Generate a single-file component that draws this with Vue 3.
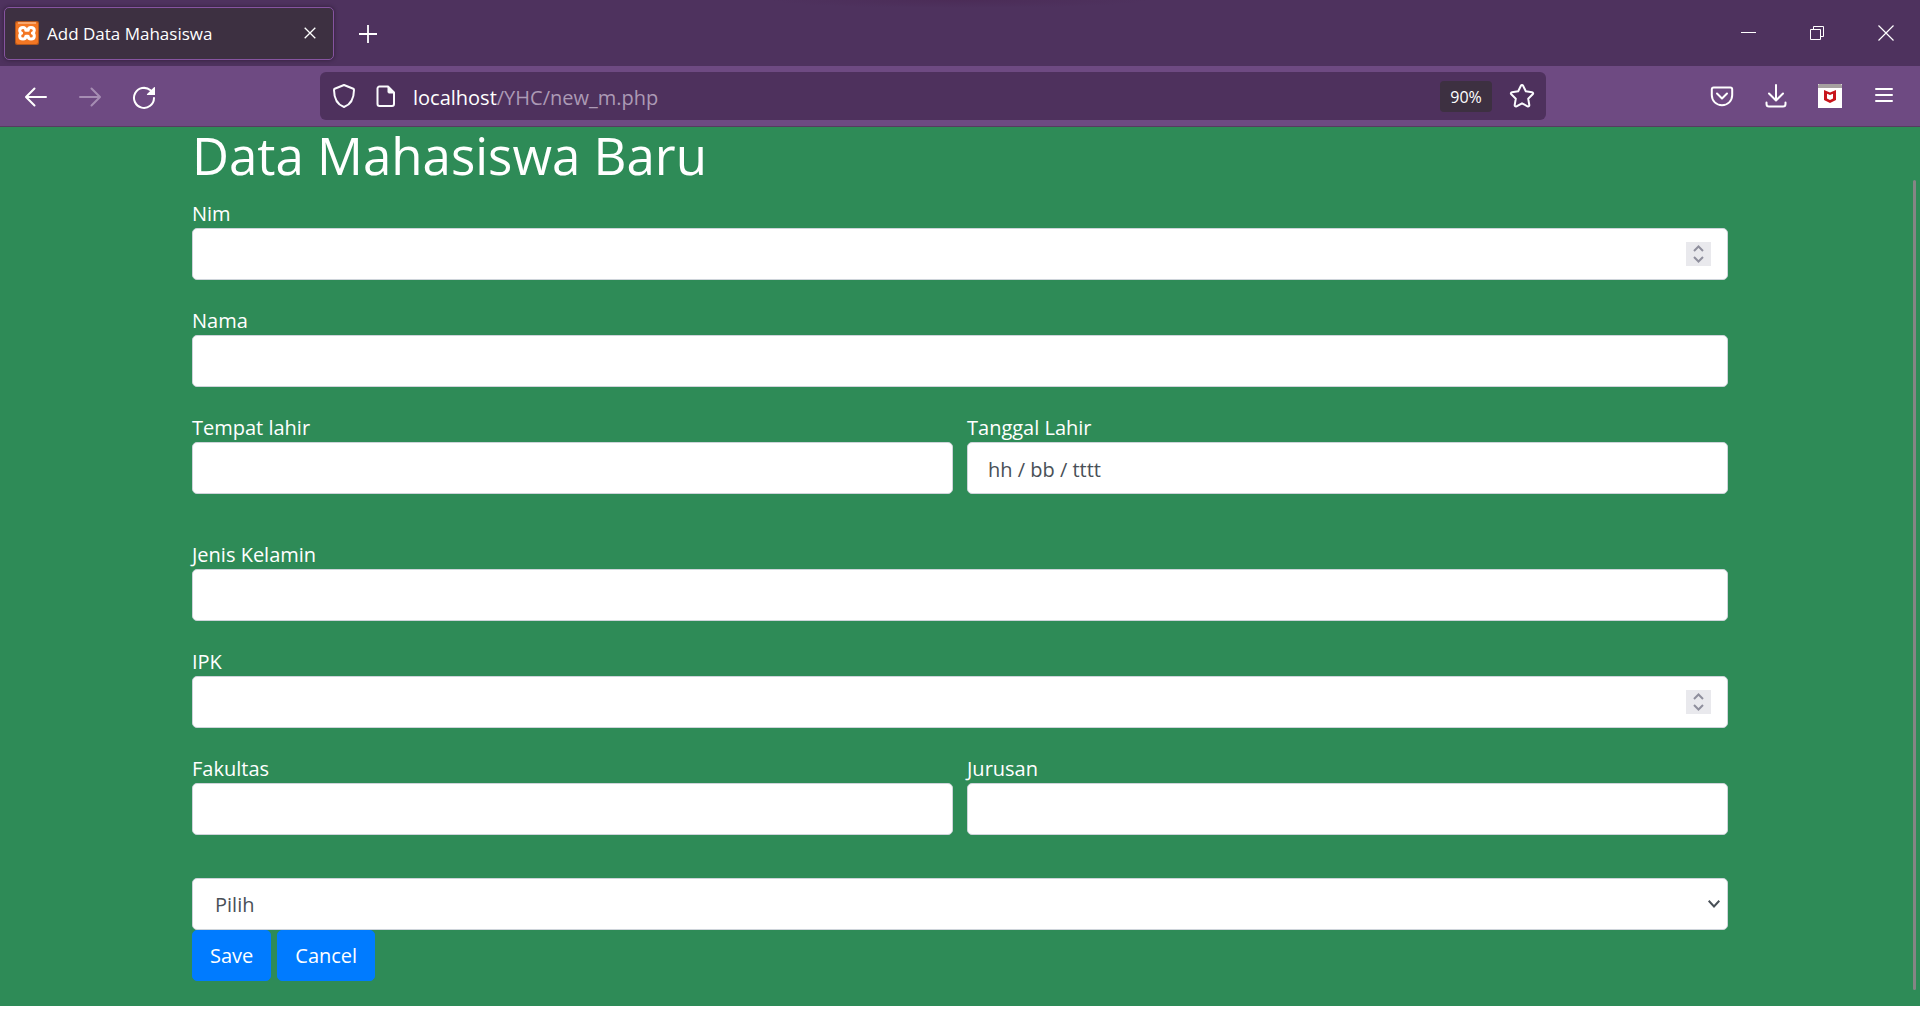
<script setup>
import { reactive } from 'vue'

const form = reactive({
  nim: '', nama: '', tempat: '', tanggal: '', kelamin: '', ipk: '', fakultas: '', jurusan: '', pilihan: ''
})

const rows = [
  [{ id: 'nim', label: 'Nim', type: 'number' }],
  [{ id: 'nama', label: 'Nama', type: 'text' }],
  [
    { id: 'tempat', label: 'Tempat lahir', type: 'text' },
    { id: 'tanggal', label: 'Tanggal Lahir', type: 'text', placeholder: 'hh / bb / tttt' }
  ],
  [{ id: 'kelamin', label: 'Jenis Kelamin', type: 'text' }],
  [{ id: 'ipk', label: 'IPK', type: 'number' }],
  [
    { id: 'fakultas', label: 'Fakultas', type: 'text' },
    { id: 'jurusan', label: 'Jurusan', type: 'text' }
  ]
]
</script>

<template>
  <div class="browser">
    <header class="titlebar">
      <div class="tab">
        <svg class="favicon" width="24" height="24" viewBox="0 0 24 24" aria-hidden="true">
          <rect width="24" height="24" rx="2" fill="#b5571c" />
          <rect x="1" y="1" width="22" height="22" rx="2" fill="#f37623" />
          <path d="M3 2h18" stroke="#f9b88a" stroke-width="1.5" />
          <path d="M8 6.500C5.800 6.500 4.700 8 4.700 9.500s.9 2.300 1.900 2.700c-1 .4-1.900 1.300-1.900 2.800s1.100 3 3.300 3c1.800 0 2.800-1.200 2.800-2.800h2.400c0 1.600 1 2.800 2.800 2.800 2.200 0 3.300-1.500 3.300-3s-.9-2.400-1.900-2.800c1-.4 1.900-1.200 1.900-2.700s-1.100-3-3.300-3c-1.800 0-2.800 1.200-2.800 2.800h-2.400C10.800 7.700 9.800 6.500 8 6.500z" fill="none" stroke="#fff" stroke-width="3" stroke-linejoin="round" />
        </svg>
        <span class="tab-title">Add Data Mahasiswa</span>
        <button class="tab-close" type="button" aria-label="Close tab">
          <svg width="12" height="12" viewBox="0 0 12 12"><path d="M.7.700l10.600 10.600M11.300.7L.7 11.300" stroke="#fff" stroke-width="1.300" /></svg>
        </button>
      </div>
      <button class="new-tab" type="button" aria-label="New tab">
        <svg width="18" height="18" viewBox="0 0 18 18"><path d="M9 0v18M0 9h18" stroke="#fff" stroke-width="1.800" /></svg>
      </button>
      <div class="window-controls">
        <button type="button" aria-label="Minimize">
          <svg width="16" height="16" viewBox="0 0 16 16"><path d="M1 7.500h15" stroke="#fff" /></svg>
        </button>
        <button type="button" aria-label="Restore">
          <svg width="14" height="14" viewBox="0 0 14 14" fill="none" stroke="#fff"><path d="M.5 3.500h10v10H.5zM3.500 3.500v-3h10v10h-3" /></svg>
        </button>
        <button type="button" aria-label="Close">
          <svg width="16" height="16" viewBox="0 0 16 16"><path d="M.5.500l15 15M15.500.5l-15 15" stroke="#fff" stroke-width="1.200" /></svg>
        </button>
      </div>
    </header>

    <nav class="toolbar">
      <div class="group">
        <button class="tool" type="button" aria-label="Back">
          <svg width="24" height="24" viewBox="0 0 24 24" fill="none" stroke="#fff" stroke-width="2" stroke-linecap="round" stroke-linejoin="round"><path d="M22 12H2.500M10.500 3.500L2 12l8.500 8.500" /></svg>
        </button>
        <button class="tool" type="button" aria-label="Forward" disabled>
          <svg width="24" height="24" viewBox="0 0 24 24" fill="none" stroke="#a68db3" stroke-width="2" stroke-linecap="round" stroke-linejoin="round"><path d="M2 12h19.500M13.500 3.500L22 12l-8.500 8.500" /></svg>
        </button>
        <button class="tool" type="button" aria-label="Reload">
          <svg width="24" height="24" viewBox="0 0 24 24"><path d="M22 13A10 10 0 1 1 18.500 5.300" fill="none" stroke="#fff" stroke-width="2" stroke-linecap="round" /><path d="M23 2.500v7.500h-7.500c-.6 0-.8-.6-.4-1L22 2.200c.4-.4 1-.2 1 .3z" fill="#fff" /></svg>
        </button>
      </div>

      <div class="urlbar">
        <svg width="24" height="26" viewBox="0 0 24 26" fill="none" stroke="#fbfbfe" stroke-width="2" stroke-linejoin="round"><path d="M12 2l9.300 3.800c.5.200.7.600.7 1.200-.1 8-2.300 14.300-10 17C4.300 21.300 2.100 15 2 7c0-.6.200-1 .7-1.200z" /></svg>
        <svg class="page-icon" width="20" height="24" viewBox="0 0 20 24"><path d="M3.500 2.500h8.500l6 6v11.500a2 2 0 0 1-2 2H3.500a2 2 0 0 1-2-2v-15.500a2 2 0 0 1 2-2z" fill="none" stroke="#fbfbfe" stroke-width="2" stroke-linejoin="round" /><path d="M12 2l6.500 7H13a1 1 0 0 1-1-1z" fill="#fbfbfe" stroke="#fbfbfe" /></svg>
        <div class="url"><span class="host">localhost</span>/YHC/new_m.php</div>
        <button class="zoom" type="button">90%</button>
        <button class="star" type="button" aria-label="Bookmark this page">
          <svg width="26" height="26" viewBox="0 0 26 26" fill="none" stroke="#fbfbfe" stroke-width="2" stroke-linejoin="round"><path d="M11.900 2.700c.5-1 1.700-1 2.200 0l2.700 5.600 6.200.9c1.100.2 1.500 1.300.7 2.100l-4.500 4.400 1.100 6.300c.2 1.100-.8 1.800-1.800 1.300L13 20.300l-5.500 3c-1 .5-2-.2-1.800-1.300l1.100-6.300-4.500-4.400c-.8-.8-.4-1.900.7-2.100l6.200-.9z" /></svg>
        </button>
      </div>

      <div class="group right">
        <button class="tool" type="button" aria-label="Save to Pocket">
          <svg width="24" height="24" viewBox="0 0 24 24" fill="none" stroke="#fff" stroke-width="2" stroke-linecap="round" stroke-linejoin="round"><path d="M3.700 3.500h16.600c1.200 0 1.900.8 1.900 1.900V11c0 6-4.500 10.200-10.200 10.200S1.800 17 1.800 11V5.400c0-1.100.7-1.900 1.900-1.900zM7 9.500l5 5 5-5" /></svg>
        </button>
        <button class="tool" type="button" aria-label="Downloads">
          <svg width="24" height="24" viewBox="0 0 24 24" fill="none" stroke="#fff" stroke-width="2" stroke-linecap="round" stroke-linejoin="round"><path d="M12 1v15M5 9.500l7 7 7-7M2.500 18.500v1.500c0 1.500 1 2.500 2.500 2.500h14c1.500 0 2.500-1 2.500-2.500v-1.500" /></svg>
        </button>
        <button class="tool" type="button" aria-label="McAfee WebAdvisor">
          <svg width="24" height="24" viewBox="0 0 24 24"><rect width="24" height="24" fill="#fff" /><path d="M0 4V1.500Q0 0 1.500 0h21Q24 0 24 1.500V4z" fill="#a6a0a0" /><path d="M6 6l6 2.500L18 6v10l-6 3-6-3z" fill="#c8151b" /><path d="M9 9.800l3 1.300 3-1.300v4.700l-3 1.500-3-1.500z" fill="#fff" /></svg>
        </button>
        <button class="tool" type="button" aria-label="Open application menu">
          <svg width="24" height="24" viewBox="0 0 24 24" stroke="#fff" stroke-width="2" stroke-linecap="round"><path d="M4 5h16M4 11h16M4 17h16" /></svg>
        </button>
      </div>
    </nav>

    <main class="page">
      <h1>Data Mahasiswa Baru</h1>
      <form @submit.prevent>
        <div v-for="(row, i) in rows" :key="i" class="row" :class="{ pair: row.length > 1 }">
          <div v-for="field in row" :key="field.id" class="field">
            <label :for="field.id">{{ field.label }}</label>
            <div class="control">
              <input :id="field.id" v-model="form[field.id]" :type="field.type" :placeholder="field.placeholder">
              <span v-if="field.type === 'number'" class="spinner" aria-hidden="true">
                <svg width="25" height="24" viewBox="0 0 25 24" fill="none" stroke="#8f8f9d" stroke-width="2"><path d="M8 9l4.500-4.500L17 9M8 15l4.500 4.500L17 15" /></svg>
              </span>
            </div>
          </div>
        </div>
        <div class="control">
          <select v-model="form.pilihan" aria-label="Pilih">
            <option value="">Pilih</option>
          </select>
          <svg class="chevron" width="12" height="8" viewBox="0 0 12 8" fill="none" stroke="#495057" stroke-width="2"><path d="M.7.800L6 6.500 11.300.8" /></svg>
        </div>
        <div class="actions">
          <button class="btn" type="submit">Save</button>
          <button class="btn" type="button">Cancel</button>
        </div>
      </form>
      <div class="scroll-thumb" aria-hidden="true"></div>
    </main>
  </div>
</template>

<style>
body {
  margin: 0;
  background: #fff;
}
</style>

<style scoped>
* {
  box-sizing: border-box;
}

.browser {
  display: flex;
  flex-direction: column;
  min-height: calc(100vh - 3px);
  font-family: "Segoe UI", "Open Sans", "Noto Sans", sans-serif;
  color: #fff;
}

button {
  padding: 0;
  border: 0;
  background: none;
  color: inherit;
  font-family: inherit;
}

svg {
  display: block;
  flex: none;
}

.titlebar {
  display: flex;
  align-items: center;
  height: 66px;
  padding-left: 4px;
  background: radial-gradient(ellipse 190px 8px at 50% 0, #4b2c57, #4e325e) #4e325e;
}

.tab {
  display: flex;
  align-items: center;
  width: 330px;
  height: 53px;
  padding: 0 16px 0 10px;
  border: 1px solid #8654a0;
  border-radius: 5px;
  background: #3d3041;
  box-shadow: 0 0 4px rgba(0, 0, 0, .4);
}

.tab-title {
  flex: 1;
  margin-left: 8px;
  padding-top: 2px;
  font-size: 17px;
  line-height: 24px;
}

.tab-close {
  display: grid;
  place-items: center;
  width: 14px;
  height: 24px;
}

.new-tab {
  display: grid;
  place-items: center;
  width: 68px;
  height: 54px;
  padding-top: 2px;
}

.window-controls {
  display: flex;
  margin-left: auto;
}

.window-controls button {
  display: grid;
  place-items: center;
  width: 69px;
  height: 66px;
}

.toolbar {
  display: grid;
  grid-template-columns: 320px 1fr 374px;
  align-items: center;
  height: 61px;
  border-bottom: 1px solid #573b60;
  background: #6e4a82;
}

.group {
  display: flex;
  padding: 0 9px;
}

.right {
  justify-content: flex-end;
}

.tool {
  display: grid;
  place-items: center;
  width: 54px;
  height: 48px;
  padding-top: 2px;
}

.right .tool {
  padding-top: 0;
}

.urlbar {
  display: flex;
  align-items: center;
  height: 48px;
  padding: 0 11px 0 12px;
  border-radius: 6px;
  background: #4e315d;
}

.page-icon {
  margin-left: 20px;
}

.url {
  flex: 1;
  margin-left: 17px;
  padding-top: 3px;
  color: #ac9ab5;
  font-size: 20px;
  line-height: 28px;
}

.host {
  color: #fff;
}

.zoom {
  width: 52px;
  height: 31px;
  padding-top: 1px;
  border-radius: 4px;
  background: #3d3041;
  font-size: 16px;
}

.star {
  margin-left: 17px;
}

.page {
  position: relative;
  flex: 1;
  padding: 0 10% 25px;
  background: #2e8b57;
}

h1 {
  margin: 0 0 13px;
  font-size: 51px;
  font-weight: 400;
  line-height: 56px;
}

.row {
  display: flex;
  gap: 14px;
  margin-bottom: 23px;
}

.pair {
  margin-bottom: 43px;
}

.field {
  flex: 1;
}

label {
  display: block;
  padding-top: 3px;
  font-size: 20px;
  line-height: 29px;
}

.control {
  position: relative;
}

input,
select {
  display: block;
  width: 100%;
  height: 52px;
  padding: 2px 20px 0;
  border: 1px solid #ced4da;
  border-radius: 5px;
  background: #fff;
  color: #495057;
  font-family: inherit;
  font-size: 20px;
  appearance: none;
}

select {
  padding: 0 22px;
}

input::placeholder {
  color: #495057;
  opacity: 1;
}

input[type="number"] {
  appearance: textfield;
}

.spinner {
  position: absolute;
  top: 14px;
  right: 17px;
  background: #e9e9ed;
  pointer-events: none;
}

.chevron {
  position: absolute;
  top: 22px;
  right: 8px;
  pointer-events: none;
}

.actions {
  display: flex;
  gap: 6px;
}

.btn {
  height: 51px;
  padding: 0 17px;
  border: 1px solid #007bff;
  border-radius: 5px;
  background: #007bff;
  font-size: 20px;
}

.scroll-thumb {
  position: absolute;
  top: 53px;
  right: 4px;
  bottom: 16px;
  width: 3px;
  border-radius: 2px;
  background: #858585;
}
</style>
